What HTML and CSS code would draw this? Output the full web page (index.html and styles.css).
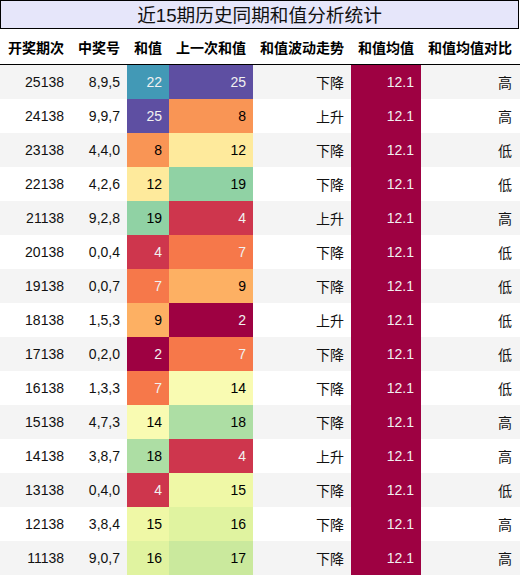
FILE: index.html
```html
<!DOCTYPE html>
<html lang="zh-CN">
<head>
    <meta charset="UTF-8">
    <title>近15期历史同期和值分析统计</title>
    <link rel="stylesheet" href="styles.css">
</head>
<body>

<div class="caption">近15期历史同期和值分析统计</div>

<table class="stats">
    <colgroup>
        <col class="c-issue">
        <col class="c-nums">
        <col class="c-sum">
        <col class="c-prev">
        <col class="c-trend">
        <col class="c-avg">
        <col class="c-cmp">
    </colgroup>
    <thead>
        <tr>
            <th>开奖期次</th>
            <th>中奖号</th>
            <th>和值</th>
            <th>上一次和值</th>
            <th>和值波动走势</th>
            <th>和值均值</th>
            <th class="last">和值均值对比</th>
        </tr>
    </thead>
    <tbody>
        <tr><td>25138</td><td>8,9,5</td><td class="v22">22</td><td class="v25">25</td><td>下降</td><td class="avg">12.1</td><td class="last">高</td></tr>
        <tr><td>24138</td><td>9,9,7</td><td class="v25">25</td><td class="v8">8</td><td>上升</td><td class="avg">12.1</td><td class="last">高</td></tr>
        <tr><td>23138</td><td>4,4,0</td><td class="v8">8</td><td class="v12">12</td><td>下降</td><td class="avg">12.1</td><td class="last">低</td></tr>
        <tr><td>22138</td><td>4,2,6</td><td class="v12">12</td><td class="v19">19</td><td>下降</td><td class="avg">12.1</td><td class="last">低</td></tr>
        <tr><td>21138</td><td>9,2,8</td><td class="v19">19</td><td class="v4">4</td><td>上升</td><td class="avg">12.1</td><td class="last">高</td></tr>
        <tr><td>20138</td><td>0,0,4</td><td class="v4">4</td><td class="v7">7</td><td>下降</td><td class="avg">12.1</td><td class="last">低</td></tr>
        <tr><td>19138</td><td>0,0,7</td><td class="v7">7</td><td class="v9">9</td><td>下降</td><td class="avg">12.1</td><td class="last">低</td></tr>
        <tr><td>18138</td><td>1,5,3</td><td class="v9">9</td><td class="v2">2</td><td>上升</td><td class="avg">12.1</td><td class="last">低</td></tr>
        <tr><td>17138</td><td>0,2,0</td><td class="v2">2</td><td class="v7">7</td><td>下降</td><td class="avg">12.1</td><td class="last">低</td></tr>
        <tr><td>16138</td><td>1,3,3</td><td class="v7">7</td><td class="v14">14</td><td>下降</td><td class="avg">12.1</td><td class="last">低</td></tr>
        <tr><td>15138</td><td>4,7,3</td><td class="v14">14</td><td class="v18">18</td><td>下降</td><td class="avg">12.1</td><td class="last">高</td></tr>
        <tr><td>14138</td><td>3,8,7</td><td class="v18">18</td><td class="v4">4</td><td>上升</td><td class="avg">12.1</td><td class="last">高</td></tr>
        <tr><td>13138</td><td>0,4,0</td><td class="v4">4</td><td class="v15">15</td><td>下降</td><td class="avg">12.1</td><td class="last">低</td></tr>
        <tr><td>12138</td><td>3,8,4</td><td class="v15">15</td><td class="v16">16</td><td>下降</td><td class="avg">12.1</td><td class="last">高</td></tr>
        <tr><td>11138</td><td>9,0,7</td><td class="v16">16</td><td class="v17">17</td><td>下降</td><td class="avg">12.1</td><td class="last">高</td></tr>
    </tbody>
</table>

</body>
</html>
```

FILE: styles.css
```css
body {
    margin: 0;
    background-color: #fff;
    color: #000;
    font-family: "Liberation Sans", "Noto Sans CJK SC", sans-serif;
}
.caption {
    width: 517px;
    height: 27px;
    line-height: 29px;
    border: 1px solid #000;
    background-color: #e6e6fa;
    color: #111;
    font-size: 18.67px;
    text-align: center;
}
.stats {
    width: 520px;
    border-collapse: collapse;
    table-layout: fixed;
    font-size: 14px;
}
.c-issue { width: 71px; }
.c-nums { width: 56px; }
.c-sum { width: 42px; }
.c-prev { width: 84px; }
.c-trend { width: 98px; }
.c-avg { width: 70px; }
.c-cmp { width: 99px; }
.stats th {
    height: 35px;
    padding: 0 7px;
    text-align: right;
    font-weight: bold;
    white-space: nowrap;
    border-bottom: 1px solid #000;
}
.stats td {
    height: 34px;
    padding: 0 7px;
    text-align: right;
    white-space: nowrap;
    color: #111;
}
.stats .last {
    padding-right: 8px;
}
.stats tbody tr:nth-child(odd) {
    background-color: #f4f4f4;
}

/* Spectral gradient, 2 .. 25 */
.stats td.v2 { background-color: #9e0142; color: #f1f1f1; }
.stats td.v4 { background-color: #ce364d; color: #f1f1f1; }
.stats td.v7 { background-color: #f6784a; color: #f1f1f1; }
.stats td.v8 { background-color: #f99555; color: #000; }
.stats td.v9 { background-color: #fdb063; color: #000; }
.stats td.v12 { background-color: #feea9c; color: #000; }
.stats td.v14 { background-color: #f9fbb2; color: #000; }
.stats td.v15 { background-color: #eff8a6; color: #000; }
.stats td.v16 { background-color: #e0f3a0; color: #000; }
.stats td.v17 { background-color: #cae99d; color: #000; }
.stats td.v18 { background-color: #addea4; color: #000; }
.stats td.v19 { background-color: #90d2a4; color: #000; }
.stats td.v22 { background-color: #4299b6; color: #f1f1f1; }
.stats td.v25 { background-color: #5e4fa2; color: #f1f1f1; }
.stats td.avg { background-color: #9e0142; color: #f1f1f1; }
```
